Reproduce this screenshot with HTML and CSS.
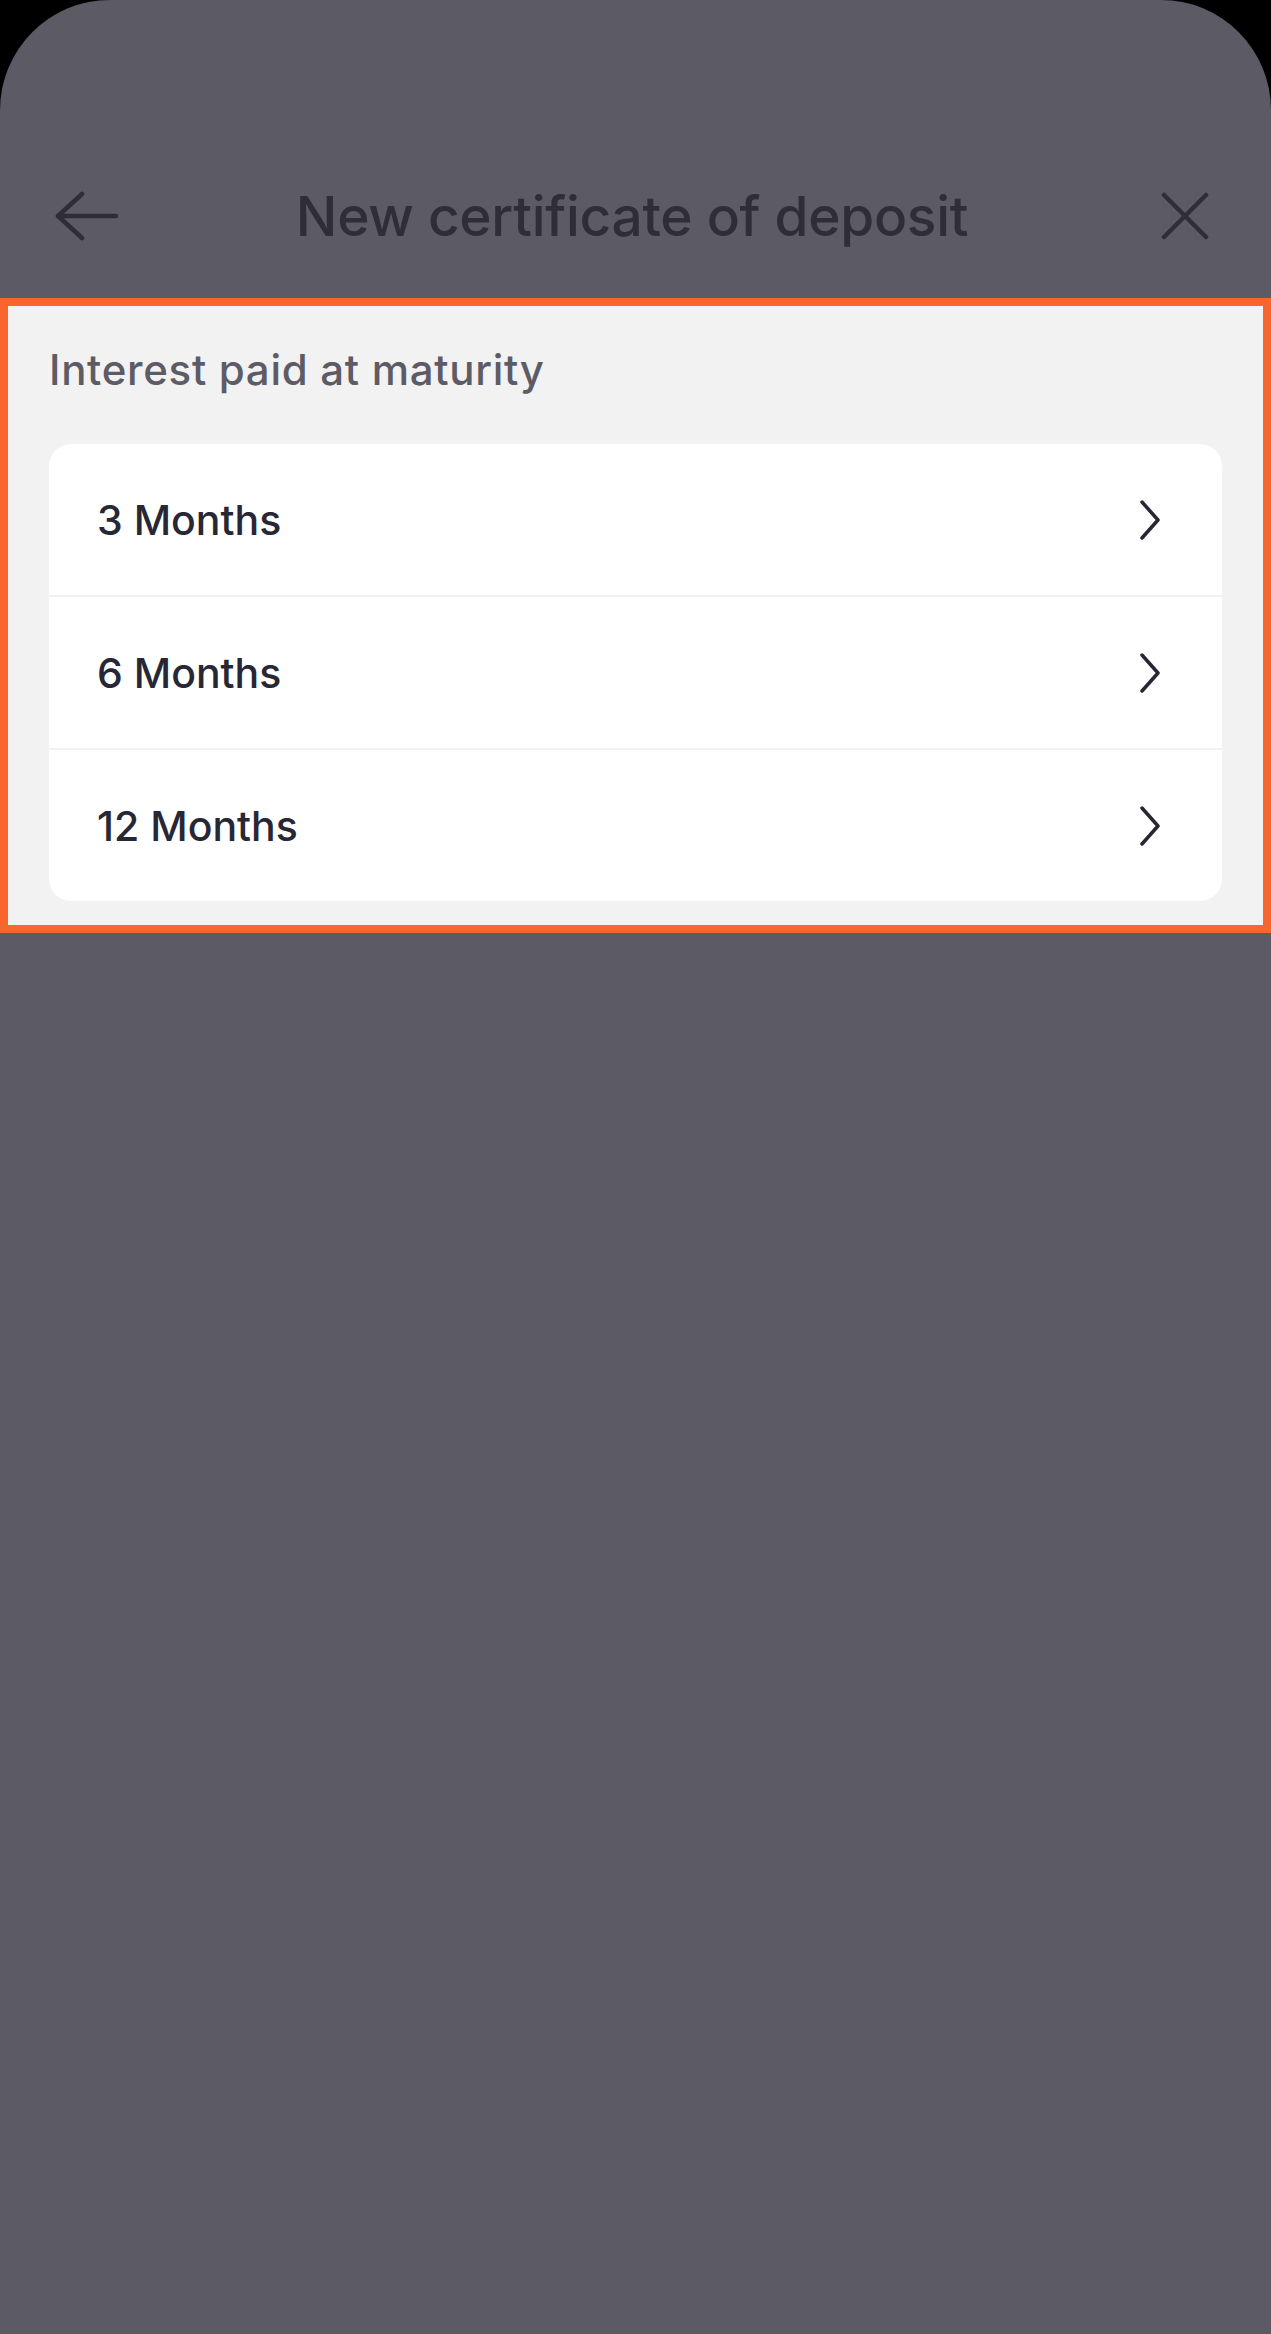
FILE: index.html
```html
<!DOCTYPE html>
<html>
<head>
  <title>New certificate of deposit</title>
  <link rel="stylesheet" href="styles.css">
</head>
<body>
  <div class="screen">
    <div class="header">
      <button class="icon-btn back" aria-label="Back">
        <svg width="64" height="50" viewBox="0 0 64 50" fill="none" stroke="#2e2d38" stroke-width="4.5" stroke-linecap="round" stroke-linejoin="round">
          <polyline points="27,3 3,25 27,47" />
          <line x1="3" y1="25" x2="61" y2="25" />
        </svg>
      </button>
      <div class="title">New certificate of deposit</div>
      <button class="icon-btn close" aria-label="Close">
        <svg width="48" height="48" viewBox="0 0 48 48" fill="none" stroke="#2e2d38" stroke-width="4.5" stroke-linecap="round">
          <line x1="3" y1="3" x2="45" y2="45" />
          <line x1="45" y1="3" x2="3" y2="45" />
        </svg>
      </button>
    </div>

    <div class="section">
      <div class="section-label">Interest paid at maturity</div>
      <div class="card">
        <div class="row">
          <span class="row-text">3 Months</span>
          <svg class="chevron" width="20" height="40" viewBox="0 0 20 40" fill="none" stroke="#272733" stroke-width="3.5" stroke-linecap="round" stroke-linejoin="round">
            <polyline points="2,2 18,20 2,38" />
          </svg>
        </div>
        <div class="row">
          <span class="row-text">6 Months</span>
          <svg class="chevron" width="20" height="40" viewBox="0 0 20 40" fill="none" stroke="#272733" stroke-width="3.5" stroke-linecap="round" stroke-linejoin="round">
            <polyline points="2,2 18,20 2,38" />
          </svg>
        </div>
        <div class="row">
          <span class="row-text">12 Months</span>
          <svg class="chevron" width="20" height="40" viewBox="0 0 20 40" fill="none" stroke="#272733" stroke-width="3.5" stroke-linecap="round" stroke-linejoin="round">
            <polyline points="2,2 18,20 2,38" />
          </svg>
        </div>
      </div>
    </div>
  </div>
</body>
</html>
```

FILE: styles.css
```css
body {
  margin: 0;
  background-color: #000;
  font-family: Inter, "Noto Sans", sans-serif;
}
.screen {
  min-height: 2334px;
  background-color: #5b5a65;
  border-radius: 110px 110px 0 0;
  overflow: hidden;
}
.header {
  height: 298px;
  box-sizing: border-box;
  padding: 133px 62px 0 55px;
  display: grid;
  grid-template-columns: 1fr auto 1fr;
  align-items: center;
}
.icon-btn {
  background: none;
  border: none;
  padding: 0;
  display: flex;
  cursor: pointer;
}
.back {
  justify-self: start;
}
.close {
  justify-self: end;
}
.title {
  font-size: 55px;
  font-weight: 500;
  color: #2e2d38;
  letter-spacing: -0.3px;
}
.section {
  border: 8px solid #f8652e;
  background-color: #f2f2f2;
  padding: 39px 41px 24px;
}
.section-label {
  font-size: 42px;
  font-weight: 500;
  line-height: 50px;
  color: #5c5b66;
  letter-spacing: 0.7px;
  margin-bottom: 49px;
}
.card {
  background-color: #fff;
  border-radius: 22px;
  overflow: hidden;
}
.row {
  height: 151px;
  display: flex;
  align-items: center;
  justify-content: space-between;
  padding: 0 62px 0 48px;
}
.row + .row {
  border-top: 2px solid #f1f1f4;
}
.row-text {
  font-size: 41px;
  font-weight: 500;
  color: #272735;
}
```
